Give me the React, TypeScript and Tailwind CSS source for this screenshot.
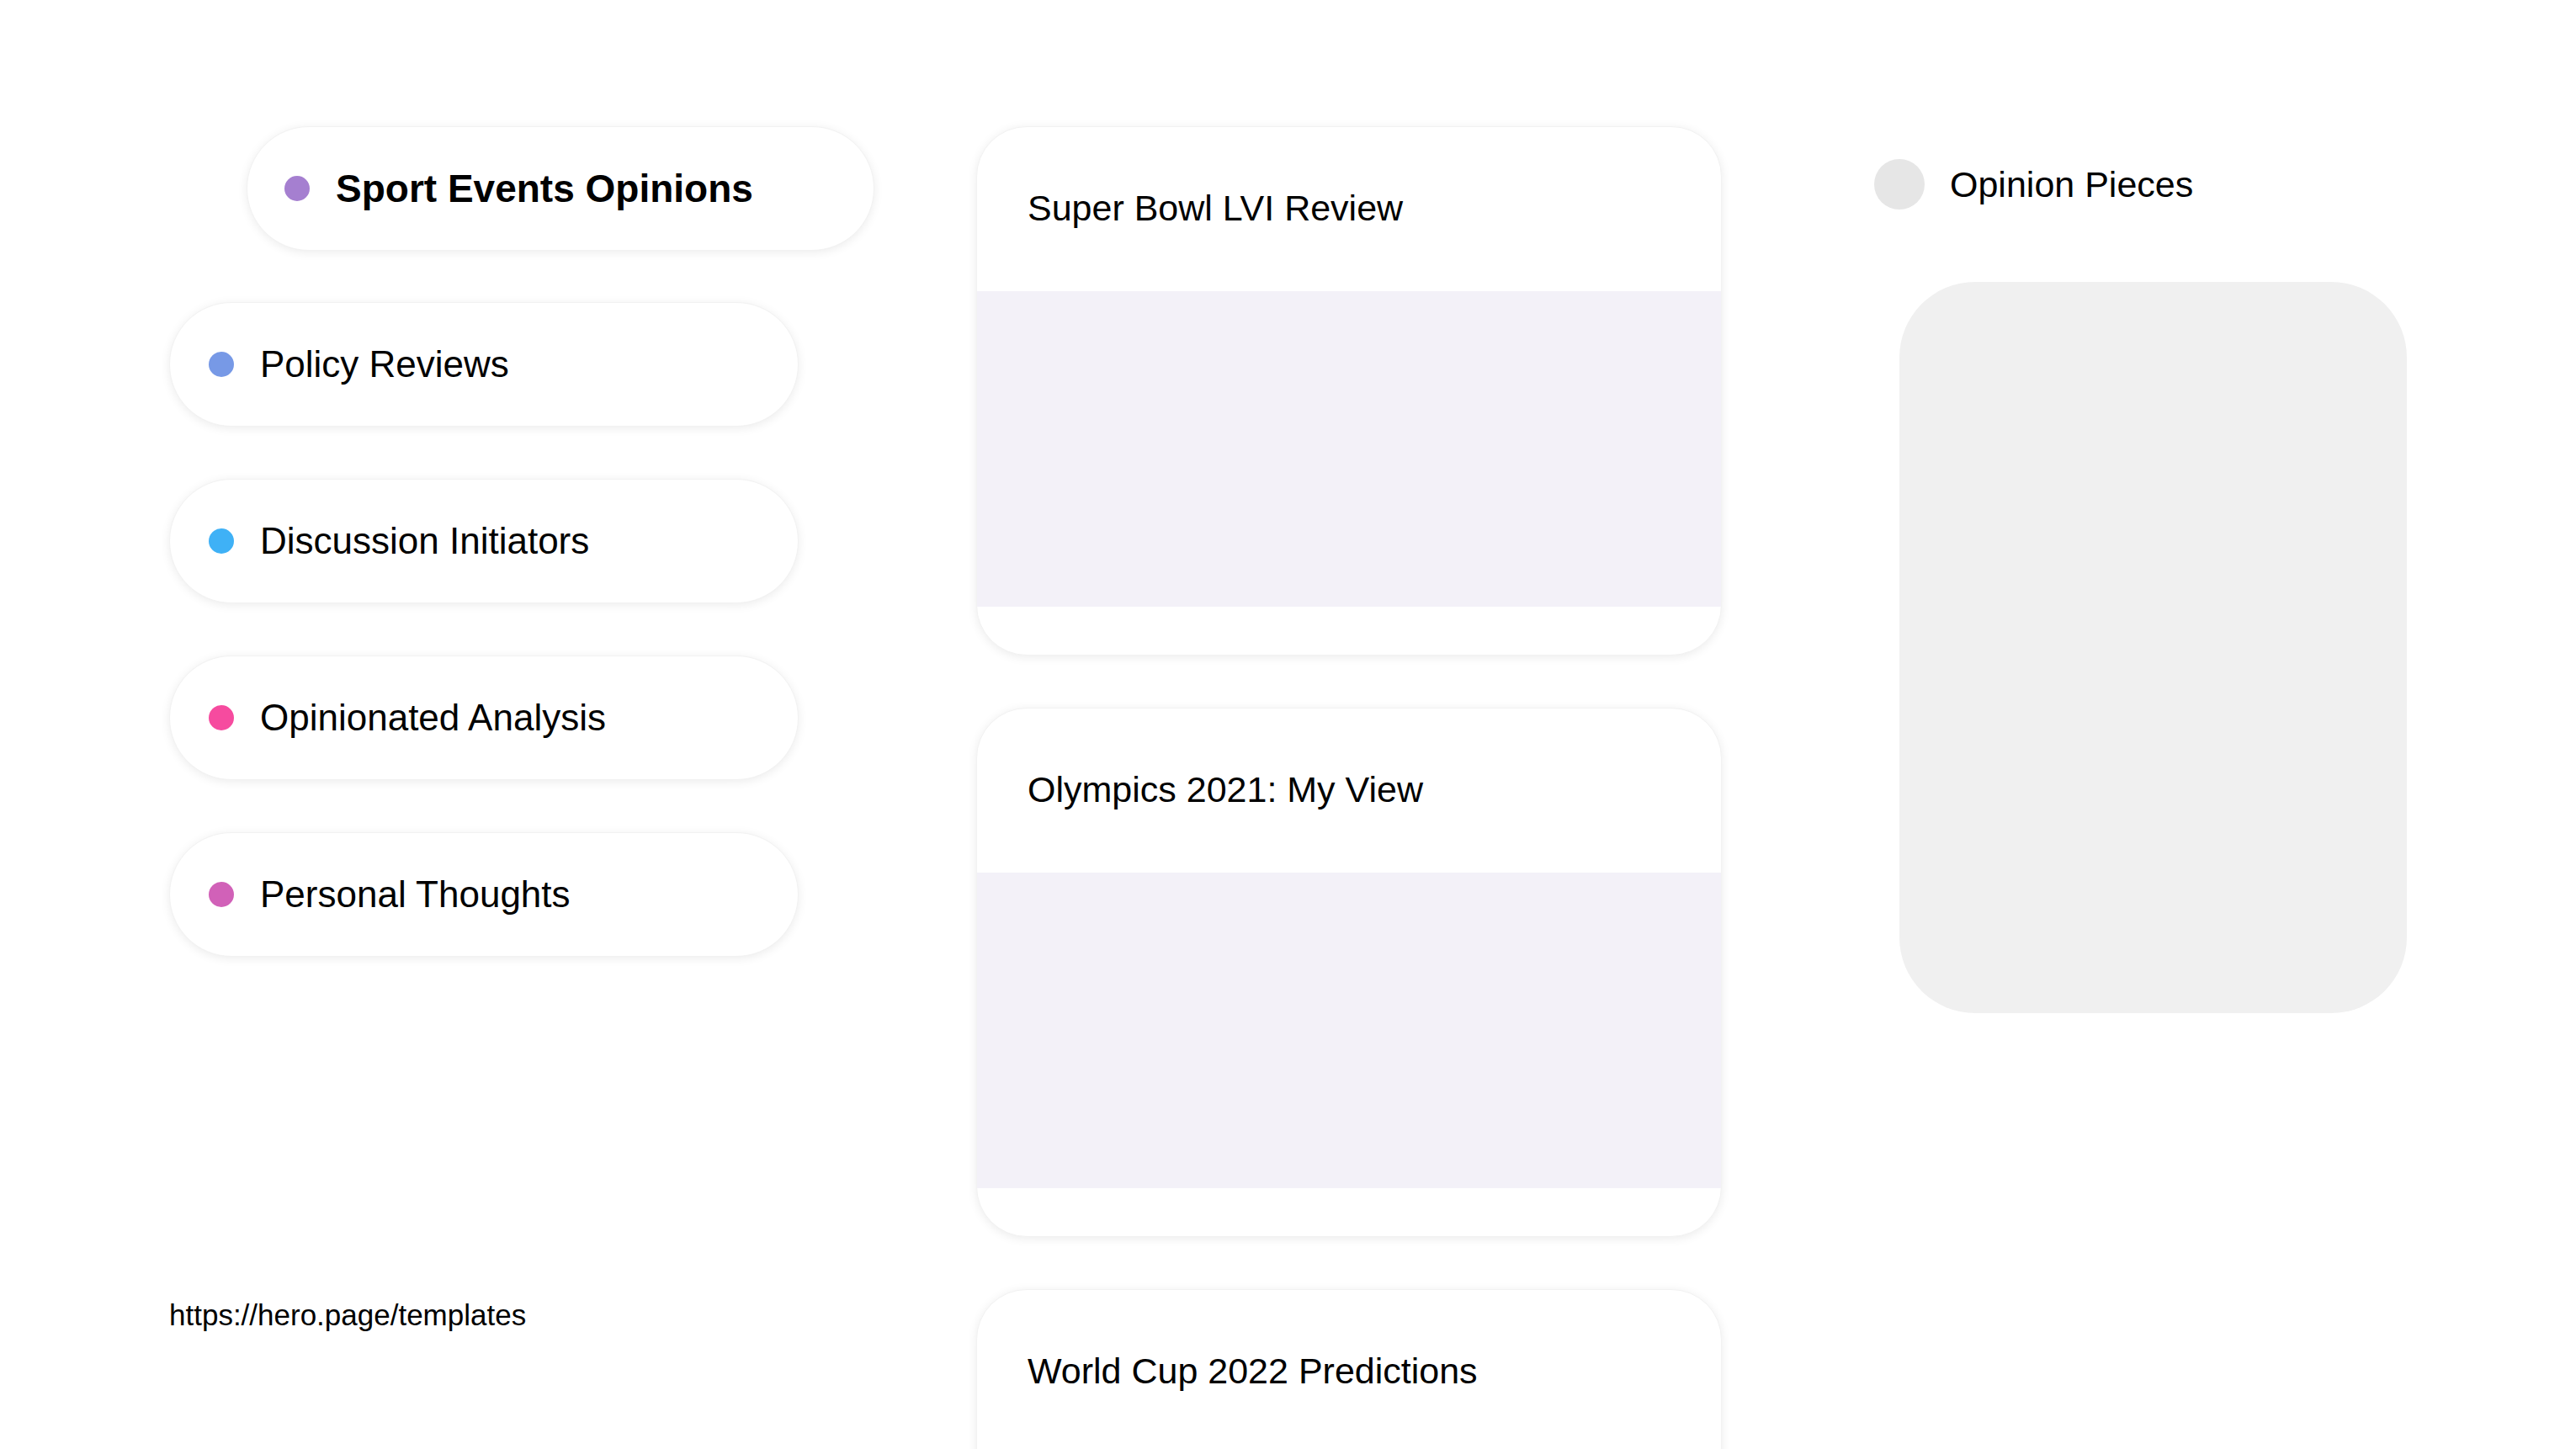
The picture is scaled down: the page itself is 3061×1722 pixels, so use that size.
export default function App() {
  const items = [
    { t: "Policy Reviews", c: "#7799e6" },
    { t: "Discussion Initiators", c: "#3fb1f6" },
    { t: "Opinionated Analysis", c: "#f64b9f" },
    { t: "Personal Thoughts", c: "#d161b8" },
  ];
  const cards = ["Super Bowl LVI Review", "Olympics 2021: My View", "World Cup 2022 Predictions"];
  const pill = "flex items-center h-[148px] rounded-[74px] bg-white shadow-[0_2px_12px_rgba(0,0,0,0.08)] border border-[#f2f2f2]";
  return (
    <div className="w-[3061px] h-[1722px] overflow-hidden bg-white flex text-black" style={{ fontFamily: '"Liberation Sans", Arial, sans-serif' }}>
      <div className="w-[1160px] shrink-0 pl-[201px] pt-[150px] flex flex-col">
        <div className={pill + " w-[746px] ml-[92px] pl-[44px]"}>
          <span className="w-[30px] h-[30px] rounded-full bg-[#a57fd0]" />
          <span className="ml-[31px] text-[46px] font-bold">Sport Events Opinions</span>
        </div>
        <div className="flex flex-col gap-[62px] mt-[61px]">
          {items.map((i) => (
            <div key={i.t} className={pill + " w-[748px] pl-[46px]"}>
              <span className="w-[30px] h-[30px] rounded-full" style={{ background: i.c }} />
              <span className="ml-[31px] text-[44px]">{i.t}</span>
            </div>
          ))}
        </div>
        <div className="mt-[400px] text-[35px]">https://hero.page/templates</div>
      </div>
      <div className="w-[886px] shrink-0 pt-[150px] flex flex-col gap-[62px]">
        {cards.map((c) => (
          <div key={c} className="shrink-0 h-[629px] rounded-[60px] bg-white shadow-[0_2px_12px_rgba(0,0,0,0.08)] border border-[#f2f2f2] overflow-hidden flex flex-col">
            <div className="h-[195px] shrink-0 pl-[60px] pt-[64px] text-[43px]">{c}</div>
            <div className="h-[375px] shrink-0 bg-[#f3f1f8]" />
          </div>
        ))}
      </div>
      <div className="pl-[181px] pt-[187px] flex flex-col">
        <div className="flex items-center">
          <span className="w-[60px] h-[60px] rounded-full bg-[#e6e6e6]" />
          <span className="ml-[30px] text-[43px]">Opinion Pieces</span>
        </div>
        <div className="ml-[30px] mt-[83px] w-[603px] h-[869px] rounded-[90px] bg-[#f0f0f0]" />
      </div>
    </div>
  );
}
